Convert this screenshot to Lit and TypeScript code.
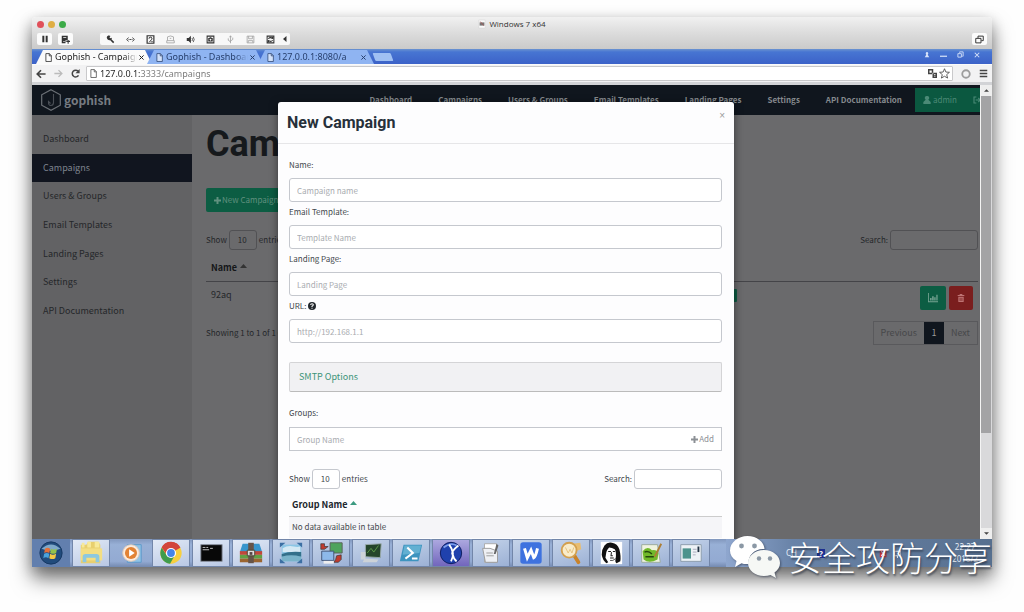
import { LitElement, html, svg, css } from "lit";
import { customElement, state } from "lit/decorators.js";

const icon = (size: number, box: string, body: unknown, cls = "") =>
  html`<svg class=${"ico " + cls} width=${size} height=${size} viewBox=${box} aria-hidden="true">${body}</svg>`;

const line = (d: string, w = 1.4) =>
  svg`<path d=${d} fill="none" stroke="currentColor" stroke-width=${w} />`;
const solid = (d: string) => svg`<path d=${d} fill="currentColor" fill-rule="evenodd" />`;

const plusIcon = icon(7, "0 0 10 10", solid("M3.6 0h2.8v3.6H10v2.8H6.4V10H3.6V6.4H0V3.6h3.6z"));
const fileIcon = icon(9, "0 0 12 12", svg`<path d="M2.5 .8h4.7l2.6 2.7v7.8H2.5z" fill="#fff" fill-opacity=".6" stroke="currentColor"/><path d="M7 .8v3h2.8" fill="none" stroke="currentColor"/>`);

const toolIcons = [
  { name: "Settings", body: [solid("M1 3a3 3 0 0 1 5-1.6L4.6 3l1.2 1.3 1.9-.8c.2 1-.1 1.700-.5 2.200L11 9.300 9.500 11 5.700 7C3.300 7.500 1.200 5.800 1 3z")] },
  { name: "Network", body: [line("M3.500 3.500L.8 6l2.700 2.500M8.500 3.500L11.200 6 8.500 8.500", 1.2), solid("M3.500 5.300h1.200v1.400H3.500zM5.500 5.300h1.200v1.400H5.500zM7.400 5.300h1.200v1.400H7.400z")] },
  { name: "Hard disk", body: [line("M1.500 1h9v10h-9z", 1.6), line("M4 5a2 2 0 1 1 3 1.500L4.500 9.500M7 9h2", 1.3)] },
  { name: "Optical drive", faint: true, body: [line("M2 7V2.500Q6 0 10 2.500V7M1 7.500h10v3H1zM5 4.500h2", 1)] },
  { name: "Sound", body: [solid("M1 4h2.500L6.500 1v10L3.500 8H1z"), line("M8 4q1.400 2 0 4M9.600 2.500q2.600 3.500 0 7", 1)] },
  { name: "Camera", body: [line("M1.500 1.500h9v9h-9z", 1.4), solid("M3 4h1.500l.5-1h2l.5 1H9v4.500H3zM6 5a1.200 1.200 0 1 0 .01 0z")] },
  { name: "USB", faint: true, body: [line("M6 11V1.500M4.700 3L6 1l1.300 2M6 9L3 7V4.500M6 8l3-2V3.500", 1)] },
  { name: "Floppy", faint: true, body: [line("M1.500 1.500h9v9h-9zM3.500 1.500V5h5V1.500M3 10V7.500h6V10", 1)] },
  { name: "Shared folders", body: [line("M1.500 1.500h9v9h-9z", 1.4), line("M3 5q3-3 6 0M9 7q-3 3-6 0", 1.4), solid("M8 2.500h2V5H7.500zM2 7h2.500L4 9.500H2z")] },
];

const tabs = [
  { title: "Gophish - Campaigns", active: true },
  { title: "Gophish - Dashboard", active: false },
  { title: "127.0.0.1:8080/a", active: false },
];

const navLinks = ["Dashboard", "Campaigns", "Users & Groups", "Email Templates", "Landing Pages", "Settings", "API Documentation"];

const fields = [
  { id: "name", label: "Name:", hint: "Campaign name", help: false },
  { id: "template", label: "Email Template:", hint: "Template Name", help: false },
  { id: "landing", label: "Landing Page:", hint: "Landing Page", help: false },
  { id: "url", label: "URL:", hint: "http://192.168.1.1", help: true },
];

const apps = [
  { name: "Explorer", cls: "lit", art: svg`<path d="M3 5h6l2-3h11l2 3v20H3z" fill="#e8cf6e"/><path d="M4 3h3v5H4zM10 2h4v6h-4zM18 2h5v6h-5z" fill="#f7e999"/><path d="M3 9h23v13H3z" fill="#f3de83"/><path d="M5 24v-6q0-3 3-3h12q3 0 3 3v6h-4v-5h-10v5z" fill="#8cc8e0"/>` },
  { name: "Media Player", cls: "flat", art: svg`<path d="M10 5h15v19H10z" fill="#8fc3e6" stroke="#5d97c8"/><circle cx="14" cy="14" r="9" fill="#fbeadb" stroke="#d8c5b8"/><circle cx="14" cy="14" r="6.500" fill="#e28233"/><path d="M12 10l6 4-6 4z" fill="#fff"/>` },
  { name: "Chrome", cls: "lit", art: svg`<circle cx="14" cy="14" r="11.500" fill="#f7cf3e"/><path d="M14 14L4 8.300A11.500 11.500 0 0 1 24 8.300z" fill="#d2453a"/><path d="M4 8.300A11.500 11.500 0 0 0 13 25.500l4.500-8L9 16z" fill="#3f9c4c"/><path d="M14 8.500h10.100a11 11 0 0 0-20.100-.4L9 15z" fill="#d2453a"/><circle cx="14" cy="14" r="5.500" fill="#fff"/><circle cx="14" cy="14" r="4.200" fill="#4585e8"/>` },
  { name: "Command Prompt", cls: "lit", art: svg`<path d="M3 5h23v18H3z" fill="#080808" stroke="#8b93a0"/><path d="M5 8h3M9 8h2M5 10.500h7M13 9h3" stroke="#ccc"/>` },
  { name: "WinRAR", cls: "lit", art: svg`<path d="M5 4h18l3 9H2z" fill="#3795cc"/><path d="M2 12h24v4H2z" fill="#c1473a"/><path d="M2 16h24v4H2z" fill="#60a044"/><path d="M2 20h24v4H2z" fill="#9b6530"/><path d="M11 3h6v22h-6z" fill="#665448"/><path d="M10 11h8v6h-8z" fill="#ddd" stroke="#443"/><path d="M12.500 13h3v3h-3z" fill="#544"/>` },
  { name: "Remote Viewer", cls: "", art: svg`<path d="M4 5h21v18H4z" fill="#8cc6e5"/><path d="M5 9q6-4 12-2 4 1 7 0v6H5z" fill="#d5e9f4"/><path d="M4 15q8-3 21-2v5H4z" fill="#33708a"/><path d="M4 18q10-3 21 0v5H4z" fill="#79b3c9"/><path d="M2 3h6L2 8zM26 3h-6l6 5zM2 25h6l-6-5zM26 25h-6l6-5z" fill="#3c6fa3"/>` },
  { name: "Network Tool", cls: "", art: svg`<path d="M13 3h13v11H13z" fill="#4fa45d" stroke="#5a5f5a"/><path d="M4 12h13v10H4z" fill="#8db9ea" stroke="#3f5274"/><path d="M3 4h4v3h4L7 10H3zM20 17l5-1v5l-3 3h-5l2-3z" fill="#c13b2e" stroke="#333" stroke-width=".7"/><path d="M6 24h11" stroke="#eee" stroke-width="3"/>` },
  { name: "Process Monitor", cls: "", art: svg`<path d="M8 5l17-1-1 15-16-1z" fill="#25452a" stroke="#9aa"/><path d="M10 14l4-5 3 4 5-7" stroke="#5f9e4c" fill="none"/><path d="M3 13h5v8H3zM7 20l15 1-2 3H5z" fill="#cdd3d8"/>` },
  { name: "PowerShell", cls: "", art: svg`<path d="M6 5h20l-4 18H2z" fill="#3d94bf"/><path d="M7 6h18l-2 8-18 2z" fill="#7cc3e0" opacity=".6"/><path d="M10 8l6 6-8 6M15 20h6" stroke="#fff" stroke-width="2.200" fill="none"/>` },
  { name: "Scanner", cls: "current", art: svg`<circle cx="14" cy="14" r="11.500" fill="#1f41ad" stroke="#0b1a5c"/><path d="M6 8q8-6 14-2" stroke="#7b9cea" stroke-width="2" fill="none"/><path d="M12 5q7 9 2 18M22 6q-9 7-6 10 1 5 4 7" stroke="#fff" stroke-width="2" fill="none"/>` },
  { name: "Notes", cls: "", art: svg`<path d="M7 4h13v20H7z" fill="#fff" stroke="#aaa"/><path d="M5 9h8l8 3v12H8z" fill="#eef0f4" stroke="#999"/><path d="M20 4l2 2-3 9h-2z" fill="#666"/><path d="M9 14h7M9 17h8" stroke="#999"/>` },
  { name: "WPS Writer", cls: "", art: svg`<rect x="2.500" y="2.500" width="23" height="23" rx="3" fill="#3e72df"/><path d="M7 9l3 10 4-8 3 8q2-1 4-10" stroke="#fff" stroke-width="3.200" fill="none"/>` },
  { name: "Search Tool", cls: "", art: svg`<path d="M15 4l9-1 1 7-6 2z" fill="#e9bd70"/><path d="M17 16l5 8" stroke="#c9832a" stroke-width="4" stroke-linecap="round"/><circle cx="12" cy="11" r="8" fill="#f9ecca" stroke="#d3a04e" stroke-width="2"/><path d="M8 8l3 6 2-4 2 4 2-6" stroke="#e5c17c" fill="none"/>` },
  { name: "IDA", cls: "", art: svg`<path d="M3 2h23v24H3z" fill="#fff"/><path d="M7 6Q10 2 15 3q6 1 8 7 2 8 1 13l-4 2q-2-1-1-5 1-7-1-10-3-2-6-2-2 2-3 5l-1 6 3 5-2 1q-4-3-5-9 0-6 3-10z" fill="#111"/><path d="M11 12.500h3M16 12.500h2.500M13 19.500h4M14.500 13l-.5 4h2" stroke="#222" stroke-width="1.100" fill="none"/><path d="M13 22q3 1 6-2" stroke="#444" fill="none"/>` },
  { name: "Notepad++", cls: "", art: svg`<path d="M4 5h17l3 19H4z" fill="#eff3df" stroke="#9a9"/><path d="M5 12q5-6 10-1 5-1 7 3l-1 7q-9 5-15 0z" fill="#71b92a"/><path d="M7 13q4-2 8 2M8 18h9" stroke="#24480c" fill="none" stroke-width="1.500"/><path d="M25 4l-7 14" stroke="#ad7e35" stroke-width="2"/>` },
  { name: "Control Panel", cls: "", art: svg`<path d="M3 5h22v18H3z" fill="#edf2f6" stroke="#8999a9"/><path d="M5 9h9v11H5z" fill="#4d938c"/><path d="M16 10h4M16 13h4M16 16h3" stroke="#aab"/><path d="M22 7v6" stroke="#234" stroke-width="2"/>` },
];

@customElement("app-root")
export class AppRoot extends LitElement {
  @state() private section = "Campaigns";

  static styles = css`
    * { box-sizing: border-box; }
    :host {
      box-sizing: border-box; display: flex; height: 100vh; padding: 17px 32px 45px; position: relative;
      background: #fefefe; overflow: hidden;
      font: 8px/12px "Noto Sans CJK SC", "Noto Sans", sans-serif; color: #444a50;
    }
    button, input, select { font: inherit; color: inherit; margin: 0; padding: 0; border: 0; background: none; outline: none; border-radius: 0; }
    a { color: inherit; text-decoration: none; }
    ul { list-style: none; margin: 0; padding: 0; }
    h1, h2 { margin: 0; font-family: Roboto, sans-serif; font-weight: 700; }
    .ico { display: block; flex: none; overflow: visible; }
    .window {
      flex: 1; min-width: 0; display: flex; flex-direction: column;
      border-radius: 4px 4px 0 0;
      box-shadow: 0 12px 20px rgba(0,0,0,.5), 0 4px 14px rgba(0,0,0,.22);
    }

    .titlebar { height: 32px; flex: none; padding: 1px 5px 4px; display: flex; flex-direction: column; justify-content: space-between; border-radius: 4px 4px 0 0; background: linear-gradient(#f1f1f1, #dedede 45%, #cacaca); color: #333; }
    .caption { display: grid; grid-template-columns: 1fr auto 1fr; align-items: center; height: 12px; font: 8px/12px "Open Sans", sans-serif; }
    .lights { display: flex; gap: 4px; }
    .light { width: 7px; height: 7px; border-radius: 50%; background: #e0505a; }
    .light.min { background: #dfae44; }
    .light.max { background: #3cab48; }
    .caption-text { display: flex; align-items: center; gap: 3px; }
    .tools { display: flex; align-items: center; height: 12px; color: #333; }
    .tool { height: 12px; width: 15px; background: #fbfbfb; border-radius: 2px; display: flex; align-items: center; justify-content: center; }
    .tool.second { margin-left: 6px; }
    .group { display: flex; margin-left: 27px; background: #f8f8f8; border-radius: 2px; }
    .group .tool { width: 20px; background: none; }
    .group .tool.faint { color: #999; }
    .group .tool.more { width: 10px; }
    .tool.restore { margin-left: auto; }

    .tabstrip { height: 15px; flex: none; padding: 1px 4px 0; display: flex; background: linear-gradient(#6b93d0, #4775d2 20%, #3c62c8); font: 9px/12px "Noto Sans", sans-serif; }
    .tab { width: 116px; margin-right: -5px; height: 14px; padding: 0 8px 0 8px; display: flex; align-items: center; gap: 2px; background: #8fb4f2; color: #28406e; clip-path: polygon(0 100%, 7px 0, 109px 0, 100% 100%); }
    .tab.active { background: #fafafa; color: #222; }
    .tab-title { flex: 1; overflow: hidden; white-space: nowrap; text-align: left; mask-image: linear-gradient(90deg, #000 84%, transparent 100%); }
    .newtab { width: 18px; height: 8px; margin: 3px 0 0 5px; background: #9fc0f3; transform: skewX(20deg); border-radius: 1px; }
    .controls { margin-left: auto; display: flex; align-items: center; height: 9px; gap: 10px; padding-right: 8px; color: #d7e3fa; }

    .address { height: 21px; flex: none; padding: 0 4px; display: flex; align-items: center; gap: 8px; background: #f2f2f3; border-top: 1px solid #fafafa; border-bottom: 3px solid #d2d3d6; color: #444; }
    .omni { flex: 1; height: 15px; margin-left: -2px; padding: 0 2px; display: flex; align-items: center; gap: 2px; background: #fff; border: 1px solid #c9c9cb; border-radius: 1px; }
    .omni input { flex: 1; min-width: 0; height: 13px; font: 9px/13px "Noto Sans", sans-serif; color: transparent; background: linear-gradient(90deg, #222 41px, #777 41px); background-clip: text; -webkit-background-clip: text; }

    .viewport { flex: 1; min-height: 0; display: flex; }
    .page { flex: 1; min-width: 0; position: relative; overflow: hidden; display: flex; flex-direction: column; background: #6a6a6c; color: #25272a; }
    .navbar { height: 30px; flex: none; padding-left: 8px; display: flex; align-items: center; background: #10161e; color: #85898d; font-weight: 700; white-space: nowrap; }
    .brand { display: flex; align-items: center; gap: 2px; font: 700 12px/16px "Noto Sans CJK SC", sans-serif; color: #777c82; margin-right: auto; }
    .navbar ul { display: flex; }
    .navbar li { padding: 0 13px; }
    .user { width: 65px; height: 24px; padding-left: 8px; display: flex; align-items: center; gap: 2px; background: #0b5840; color: #4b8a76; font-weight: 400; overflow: hidden; }
    .user .out { margin-left: 14px; }
    .columns { flex: 1; min-height: 0; display: flex; }
    .sidebar { width: 160px; flex: none; padding-top: 10px; background: #626264; font-size: 9px; }
    .sidebar ul { height: 200px; display: flex; flex-direction: column; }
    .sidebar li { flex: 1; display: flex; }
    .sidebar a { flex: 1; display: flex; align-items: center; padding-left: 11px; }
    .sidebar a.on { background: #11151f; color: #7e848e; }
    .main { flex: 1; padding: 8px 2px 0 14px; }
    h1 { font-size: 36px; line-height: 42px; color: #16191c; }
    .new { height: 24px; margin-top: 23px; padding: 0 8px; display: flex; align-items: center; gap: 1px; background: #0c5d43; color: #60917f; border-radius: 2px; }
    .bar { display: flex; align-items: center; justify-content: space-between; }
    .bar label { display: flex; align-items: center; gap: 2px; }
    .bar select { appearance: none; width: 28px; height: 20px; padding-left: 8px; border: 1px solid #ccc; border-radius: 3px; font-size: 8px; }
    .bar input { width: 88px; height: 20px; border: 1px solid #ccc; border-radius: 3px; }
    .main .bar { margin-top: 18px; }
    .main .bar select, .main .bar input { border-color: #515154; }
    table { width: 100%; border-collapse: collapse; }
    th, td { text-align: left; padding: 0; }
    th { font-size: 9px; font-weight: 700; color: #151719; }
    .th-in { display: flex; align-items: center; gap: 3px; }
    .main th { height: 31px; padding: 6px 5px 0; border-bottom: 1px solid #444448; }
    .main td { height: 33px; padding: 0 5px; }
    .main td.who { font-size: 9px; padding-bottom: 6px; }
    .main td.state { padding-bottom: 5px; }
    .acts { display: flex; justify-content: flex-end; gap: 3px; }
    .act { width: 26px; height: 24px; display: flex; align-items: center; justify-content: center; border-radius: 2px; background: #0c5d43; color: #77a594; }
    .act.del { width: 24px; background: #7a1e1e; color: #bf7474; }
    .status { display: block; width: 100%; height: 13px; background: #0c5d43; border-radius: 1px; }
    .main .c-name { width: 260px; }
    .main .c-status { width: 276px; }
    .foot { display: flex; justify-content: space-between; align-items: center; margin-top: 7px; }
    .pager { display: flex; height: 24px; border: 1px solid #59595c; font-size: 9px; color: #47484a; }
    .pager button { padding: 0 7px; }
    .pager .cur { width: 20px; padding: 0; background: #10161e; color: #999; }

    .dialog { position: absolute; top: 17px; left: 50%; width: 456px; max-width: 96%; transform: translateX(-50%); min-height: 100%; background: #fdfdfe; color: #43484d; border-radius: 3px; box-shadow: 0 2px 8px rgba(0,0,0,.5); }
    .head { height: 42px; padding: 0 9px; display: flex; justify-content: space-between; border-bottom: 1px solid #e6e6e8; }
    h2 { font-size: 16px; line-height: 42px; color: #27303a; }
    .close { height: 12px; margin: 8px 0; font: 10px/12px "Liberation Sans", sans-serif; color: #9a9a9a; }
    .form { padding: 11px 12px 0 11px; }
    .form > label { height: 23px; padding-bottom: 3px; display: flex; align-items: center; gap: 2px; }
    .form > input, .combo { display: block; width: 100%; height: 24px; padding: 0 7px; border: 1px solid #c5c8ce; border-radius: 3px; background: #fff; }
    ::placeholder { color: #a9acb0; opacity: 1; }
    .smtp { display: flex; align-items: center; width: 100%; height: 30px; margin: 19px 0 10px; padding: 0 9px; border: 1px solid #d4d4d6; border-bottom-color: #bbb; border-radius: 2px; background: #f1f1f3; color: #3c9478; font-size: 9px; }
    .form > .groups { height: 25px; }
    .combo { display: flex; align-items: center; border-radius: 0; }
    .combo input { flex: 1; min-width: 0; height: 20px; }
    .combo button { display: flex; align-items: center; gap: 1px; color: #8c9095; }
    .form .bar { margin: 18px 0 6px; }
    .form .bar select, .form .bar input { border-color: #c5c8ce; background: #fff; }
    .form th { height: 21px; padding-left: 3px; border-bottom: 1px solid #ccc; }
    .form td { height: 22px; padding-left: 3px; background: #f5f5f8; }
    .form .th-in { color: #20262c; }

    .scroll { width: 12px; flex: none; display: flex; flex-direction: column; align-items: stretch; background: #d9d9db; border-left: 1px solid #f4f4f4; color: #444; }
    .arrow { height: 11px; display: flex; align-items: center; justify-content: center; background: #eee; }
    .thumb { flex: 78; background: #a3a3a5; margin-right: 1px; }
    .rest { flex: 22; }

    .taskbar { height: 28px; flex: none; display: flex; align-items: stretch; gap: 2px; background: linear-gradient(#8197bd, #98b0d6 20%, #93aad2 80%, #7389b0); overflow: hidden; }
    .start { width: 38px; display: flex; align-items: center; justify-content: center; background: #627fae; }
    .app { width: 38px; display: flex; align-items: center; justify-content: center; border: 1px solid #7286a9; background: linear-gradient(160deg, #c5d4ea, #9cb1d5); }
    .app.lit { background: linear-gradient(160deg, #e2eaf6, #b9c8e4); }
    .app.flat { border-color: transparent; background: none; }
    .app.current { background: linear-gradient(#aca8df, #7266bd); }
    .tray { flex: 1; margin-left: 14px; padding-right: 14px; display: flex; align-items: center; justify-content: flex-end; background: linear-gradient(90deg, #8ea6ce, #6983a8 25%, #57708f); color: #e6edf5; font: 8px/12px "Noto Sans", sans-serif; }
    .lang { display: flex; align-items: center; gap: 20px; margin-right: auto; padding-left: 60px; }
    .q { width: 8px; line-height: 9px; text-align: center; background: #1c2f91; color: #fff; font-weight: 700; }
    .tray-ico { margin-right: 50px; display: flex; gap: 5px; }
    .clock { text-align: center; }

    .mark { position: absolute; right: 32px; bottom: 33px; display: flex; align-items: center; gap: 8px; color: #fff; font: 300 34px/44px "Noto Sans CJK SC", sans-serif; text-shadow: 1px 2px 2px rgba(40,50,65,.75); white-space: nowrap; }
    .mark svg { filter: drop-shadow(1px 1px 1px rgba(50,60,80,.7)); }
  `;

  private lengthSelect(id: string) {
    return html`<label for=${id}>Show <select id=${id}><option>10</option><option>25</option></select> entries</label>`;
  }

  private sort(color: string) {
    return html`<svg class="ico" width="7" height="9" viewBox="0 0 7 9" aria-hidden="true"><path d="M0 4L3.500 0 7 4z" fill=${color} /></svg>`;
  }

  private chrome() {
    return html`
      <header class="titlebar">
        <div class="caption">
          <div class="lights"><span class="light"></span><span class="light min"></span><span class="light max"></span></div>
          <div class="caption-text">
            ${icon(8, "0 0 10 10", svg`<path d="M1 0h8v10H1z" fill="#fafafa" stroke="#ccc" stroke-width=".5"/><path d="M2 3h6v4H2z" fill="#777"/><path d="M3 2l4 5" stroke="#a55"/>`)}
            <span>Windows 7 x64</span>
          </div>
        </div>
        <div class="tools">
          <button class="tool" aria-label="Pause">${icon(8, "0 0 12 12", solid("M2 1h3v10H2zM7 1h3v10H7z"))}</button>
          <button class="tool second" aria-label="Snapshots">${icon(9, "0 0 12 12", [solid("M1 1h8v6H6v4H1zM3 3v1h4V3zM3 8h2v1H3z"), line("M7 8.500h5M9.500 6.500v5", 1.4)])}</button>
          <div class="group">
            ${toolIcons.map((t) => html`<button class="tool ${t.faint ? "faint" : ""}" aria-label=${t.name}>${icon(9, "0 0 12 12", t.body)}</button>`)}
            <button class="tool more" aria-label="Collapse">${icon(6, "0 0 6 6", solid("M4.500 0v6L1 3z"))}</button>
          </div>
          <button class="tool restore" aria-label="Windows">${icon(9, "0 0 12 12", line("M4 4V1.500h7v6H8.500M1 4.500h7v6H1z", 1.3))}</button>
        </div>
      </header>
      <nav class="tabstrip">
        ${tabs.map((t) => html`<button class="tab ${t.active ? "active" : ""}">
          ${fileIcon}<span class="tab-title">${t.title}</span>
          ${icon(5, "0 0 6 6", line("M.5 .5l5 5M5.500 .5l-5 5", 1.2))}
        </button>`)}
        <button class="newtab" aria-label="New tab"></button>
        <div class="controls">
          ${icon(6, "0 0 8 8", solid("M4 0a2 2 0 0 1 1 3.500L7 7H1l2-3.500A2 2 0 0 1 4 0z"))}
          ${icon(7, "0 0 8 8", line("M0 6h8"))}
          ${icon(7, "0 0 8 8", line("M3 2V1h4v5H6M1 3h4v4H1z", 1))}
          ${icon(6, "0 0 8 8", line("M1 1l6 6M7 1L1 7"))}
        </div>
      </nav>
      <div class="address">
        ${icon(10, "0 0 12 12", line("M11.500 6H1.500M6 1.500L1.500 6 6 10.500", 2))}
        ${icon(9, "0 0 12 12", svg`<path d="M.5 6h10M6 1.500L10.500 6 6 10.500" fill="none" stroke="#bbb" stroke-width="1.800"/>`)}
        ${icon(9, "0 0 12 12", [line("M10 8.500A4.500 4.500 0 1 1 9.500 3", 2), solid("M11.500 0v5.500H6z")])}
        <label class="omni">
          ${fileIcon}
          <input aria-label="Address" .value=${"127.0.0.1:3333/campaigns"} />
          ${icon(9, "0 0 12 12", solid("M0 0h7v7H0zM2 2v3h3V2zM6 5h6v7H6zM8 7v1h2V7zM8 9v1h2V9z"))}
          ${icon(11, "0 0 12 12", line("M6 .8l1.500 3.600 3.900.3-3 2.500 1 3.800L6 9l-3.400 2 1-3.800-3-2.500 3.900-.3z", 0.9))}
        </label>
        ${icon(10, "0 0 12 12", svg`<circle cx="6" cy="6" r="4.500" fill="none" stroke="#9d9d9d" stroke-width="2.200"/>`)}
        ${icon(9, "0 0 12 12", line("M1 2h10M1 6h10M1 10h10", 2.2))}
      </div>`;
  }

  private dialog() {
    return html`<section class="dialog" role="dialog" aria-labelledby="dlg">
      <header class="head"><h2 id="dlg">New Campaign</h2><button class="close" aria-label="Close">×</button></header>
      <div class="form">
        ${fields.map((f) => html`
          <label for=${f.id}>${f.label}
            ${f.help ? icon(8, "0 0 12 12", svg`<circle cx="6" cy="6" r="6" fill="#22272c"/><path d="M4 4.500q0-2 2-2t2 1.800Q8 5.500 6 6.500v1M6 8.500v1.500" stroke="#fff" stroke-width="1.600" fill="none"/>`) : ""}
          </label>
          <input id=${f.id} placeholder=${f.hint} />`)}
        <button class="smtp">SMTP Options</button>
        <label for="group" class="groups">Groups:</label>
        <div class="combo"><input id="group" placeholder="Group Name" /><button>${plusIcon} Add</button></div>
        <div class="bar">${this.lengthSelect("glen")}<label for="gs">Search: <input id="gs" /></label></div>
        <table>
          <thead><tr><th><span class="th-in">Group Name ${this.sort("#3c9a80")}</span></th></tr></thead>
          <tbody><tr><td>No data available in table</td></tr></tbody>
        </table>
      </div>
    </section>`;
  }

  render() {
    return html`
      <div class="window">
        ${this.chrome()}
        <div class="viewport">
          <div class="page">
            <nav class="navbar">
              <a class="brand" href="#">
                ${icon(22, "0 0 22 22", svg`<path d="M11 .8l9.300 5v10.400L11 21.200l-9.300-5V5.800z" fill="none" stroke="#6c7177" stroke-width="1.200"/><path d="M13.500 5v8.500q0 3-2.700 3-2.600 0-2.300-4l2 2" fill="none" stroke="#4a4f56" stroke-width="1.100"/>`)}
                gophish</a>
              <ul>${navLinks.map((n) => html`<li><a href="#">${n}</a></li>`)}</ul>
              <button class="user">
                ${icon(8, "0 0 12 12", solid("M6 0a3 3 0 0 1 2 5.500L11.500 9v3H.5V9L4 5.500A3 3 0 0 1 6 0z"))}admin
                ${icon(8, "0 0 12 12", line("M5 1.500H1.500v9H5M4 6h7M8 3l3 3-3 3", 1.6), "out")}
              </button>
            </nav>
            <div class="columns">
              <aside class="sidebar"><ul>
                ${navLinks.map((n) => html`<li><a href="#" class=${n === this.section ? "on" : ""} @click=${() => (this.section = n)}>${n}</a></li>`)}
              </ul></aside>
              <main class="main">
                <h1>Campaigns</h1>
                <button class="new">${plusIcon} New Campaign</button>
                <div class="bar">${this.lengthSelect("clen")}<label for="cs">Search: <input id="cs" /></label></div>
                <table>
                  <thead><tr><th class="c-name"><span class="th-in">Name ${this.sort("#333")}</span></th><th class="c-status"></th><th></th></tr></thead>
                  <tbody><tr>
                    <td class="who">92aq</td>
                    <td class="state"><span class="status"></span></td>
                    <td><div class="acts">
                      <button class="act" aria-label="Results">${icon(10, "0 0 12 12", solid("M0 0h1v10h11v1H0zM2.500 6h1.800v3H2.500zM5 4h1.800v5H5zM7.500 5h1.600v4H7.500zM10 2h1.500v7H10z"))}</button>
                      <button class="act del" aria-label="Delete">${icon(8, "0 0 12 12", solid("M4 0h4v1.500h3V3H1V1.500h3zM2 4h8v8H2zM4 5.500v5h.8v-5zM5.600 5.500v5h.8v-5zM7.200 5.500v5H8v-5z"))}</button>
                    </div></td>
                  </tr></tbody>
                </table>
                <div class="foot">
                  <span>Showing 1 to 1 of 1 entries</span>
                  <div class="pager"><button>Previous</button><button class="cur">1</button><button>Next</button></div>
                </div>
              </main>
            </div>
            ${this.dialog()}
          </div>
          <div class="scroll">
            <div class="arrow">${icon(5, "0 0 6 6", solid("M0 4.500L3 1.500l3 3z"))}</div>
            <div class="thumb"></div><div class="rest"></div>
            <div class="arrow">${icon(5, "0 0 6 6", solid("M0 1.500l3 3 3-3z"))}</div>
          </div>
        </div>
        <footer class="taskbar">
          <button class="start" aria-label="Start">${icon(24, "0 0 28 28", svg`<circle cx="14" cy="14" r="13" fill="#214b7c" stroke="#14355f"/><path d="M3 9q11-10 22 0-11 5-22 0z" fill="#7ea8c9"/><path d="M7 9q3-2 6 0l-1 5q-3-2-6 0z" fill="#e3703a"/><path d="M14 9q3 2 7 0l-1 5q-3 2-7 0z" fill="#92c14b"/><path d="M6 15q3-2 6 0l-1 5q-3-2-6 0z" fill="#4aa3dc"/><path d="M13 15q3 2 7 0l-1 5q-3 2-7 0z" fill="#f3c843"/>`)}</button>
          ${apps.map((a) => html`<button class="app ${a.cls}" aria-label=${a.name}>${icon(26, "0 0 28 28", a.art)}</button>`)}
          <div class="tray">
            <div class="lang"><span>CH</span><span class="q">?</span></div>
            <div class="tray-ico">
              ${icon(9, "0 0 12 12", svg`<path d="M1 1h9v10H1z" fill="#c7313c"/><path d="M3 3l5 6M8 3L3 9" stroke="#fff" stroke-width="1.500"/>`)}
              ${icon(9, "0 0 12 12", line("M2 3h8v6H2zM6 9v3"))}
            </div>
            <div class="clock">22:27<br />2016/2</div>
          </div>
        </footer>
      </div>
      <div class="mark">
        <svg width="50" height="42" viewBox="0 0 50 42" aria-hidden="true">
          <path d="M17.500 0C27 0 34 6 34.500 13c-9-1-17 6-16 15-3 .2-5 0-7-.8L5 31l1.500-6C2 22 0 18.500 0 14.500 0 6.500 8 0 17.500 0z" fill="#fff"/>
          <path d="M34 14c9 0 16 6 16 13 0 4-2 7-5.500 9.500L46 42l-5.500-3q-3 1-6.500 1c-9 0-16-6-16-13s7-13 16-13z" fill="#f6f8f5"/>
          <g fill="#8b98a5"><circle cx="11.500" cy="10" r="2.400"/><circle cx="24.500" cy="10" r="2.400"/><circle cx="29" cy="22.500" r="2.200"/><circle cx="40" cy="22.500" r="2.200"/></g>
        </svg>
        <span>安全攻防分享</span>
      </div>`;
  }
}
